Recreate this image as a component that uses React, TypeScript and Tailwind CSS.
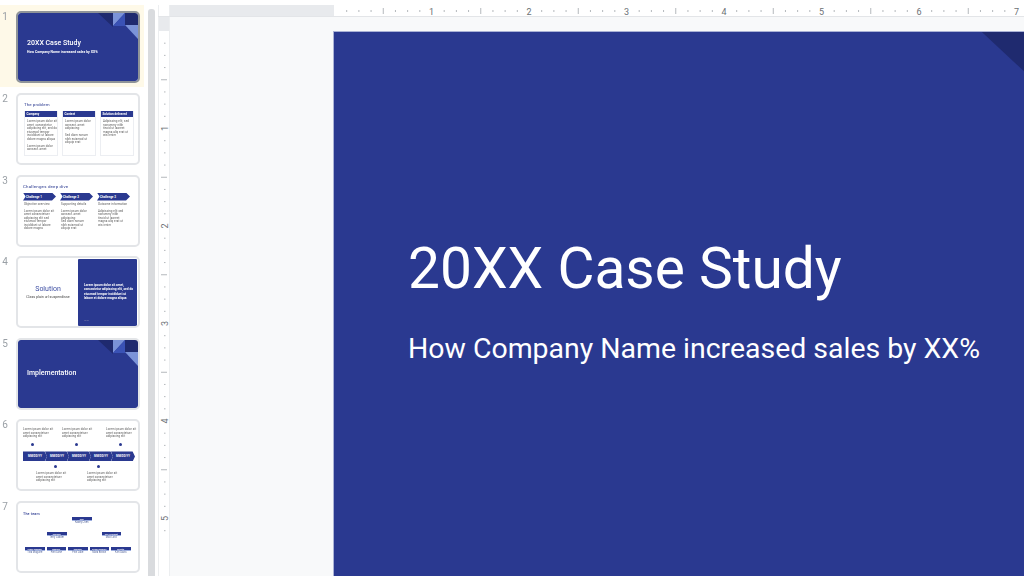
import React from "react";

function Decor() {
  return (
    <svg viewBox="0 0 120 68" className="absolute inset-0 w-full h-full">
      <polygon points="80,0 95,0 95,14" fill="#1f2a6f" />
      <polygon points="95,0 107,0 95,13" fill="#7b93d8" />
      <polygon points="107,0 107,13 95,13" fill="#3a52b5" />
      <rect x="107" y="0" width="13" height="12" fill="#1f2a6f" />
      <polygon points="107,12 120,12 120,26" fill="#7b93d8" />
    </svg>
  );
}

function Thumb({ n, selected, children }: { n: number; selected?: boolean; children: React.ReactNode }) {
  return (
    <div className={selected ? "flex h-[82px] bg-[#fef9e8] pt-[6px]" : "flex h-[81.6px] pt-[6px]"}>
      <div className="w-[16px] pr-[6px] text-center text-[10px] leading-[12px] text-[#9aa0a6] blur-[0.3px]">{n}</div>
      <div
        className={
          selected
            ? "w-[124px] h-[72px] border-2 border-[#8f9499] rounded-[5px] overflow-hidden bg-white"
            : "w-[124px] h-[72px] border-2 border-[#e3e5e8] rounded-[5px] overflow-hidden bg-white"
        }
      >
        <div className="relative w-full h-full overflow-hidden blur-[0.5px]">{children}</div>
      </div>
    </div>
  );
}

function Lines({ items, className }: { items: string[]; className?: string }) {
  return (
    <div className={"text-[2.9px] leading-[3.5px] tracking-[0.1px] text-[#555] " + (className ?? "")}>
      {items.map((t, i) => (
        <div key={i} className="whitespace-nowrap h-[3.5px]">{t}</div>
      ))}
    </div>
  );
}

function ColCard({ title, children }: { title: string; children: React.ReactNode }) {
  return (
    <div className="w-[34px] h-[45px] border border-[#eceef2] border-t-0">
      <div className="h-[6px] bg-[#2a3990] text-white text-[3px] font-bold leading-[6px] pl-[1.5px] whitespace-nowrap">{title}</div>
      <div className="pt-[3px] pl-[2px]">{children}</div>
    </div>
  );
}

function Slide2() {
  return (
    <div className="pl-[6px] pt-[7px]">
      <div className="text-[4.4px] leading-[6px] text-[#2a3990] tracking-[0.1px]">The problem</div>
      <div className="flex gap-[4px] mt-[3px]">
        <ColCard title="Company">
          <Lines items={["Lorem ipsum dolor sit", "amet, consectetur", "adipiscing elit, sed do", "eiusmod tempor", "incididunt ut labore", "dolore magna aliqua", "", "Lorem ipsum dolor", "consect. amet"]} />
        </ColCard>
        <ColCard title="Context">
          <Lines items={["Lorem ipsum dolor", "consect. amet", "adipiscing:", "", "   Sed diam nonum", "   nibh euismod ut", "   aliquip erat"]} />
        </ColCard>
        <ColCard title="Solution delivered">
          <Lines items={["Adipiscing elit, sed", "nonummy nibh", "tincid ut laoreet", "magna aliq erat ut", "wisi enim"]} />
        </ColCard>
      </div>
    </div>
  );
}

function Chev({ title, children }: { title: string; children: React.ReactNode }) {
  return (
    <div className="w-[33px]">
      <div className="h-[8px] bg-[#2a3990] text-white text-[3px] font-bold leading-[8px] pl-[3px] whitespace-nowrap [clip-path:polygon(0_0,88%_0,100%_50%,88%_100%,0_100%,8%_50%)]">{title}</div>
      <div className="pt-[2px] pl-[1px]">{children}</div>
    </div>
  );
}

function Slide3() {
  return (
    <div className="pl-[5px] pt-[7px]">
      <div className="text-[4.4px] leading-[6px] text-[#2a3990] tracking-[0.2px]">Challenges deep dive</div>
      <div className="flex gap-[4px] mt-[3px]">
        <Chev title="Challenge 1">
          <Lines items={["Objective overview", "", "Lorem ipsum dolor sit", "amet consectetuer", "adipiscing elit sed", "eiusmod tempor", "incididunt ut labore", "dolore magna"]} />
        </Chev>
        <Chev title="Challenge 2">
          <Lines items={["Supporting details", "", "Lorem ipsum dolor", "consect. amet", "adipiscing:", "   Sed diam nonum", "   nibh euismod ut", "   aliquip erat"]} />
        </Chev>
        <Chev title="Challenge 3">
          <Lines items={["Outcome information", "", "Adipiscing elit sed", "nonummy nibh", "tincid ut laoreet", "magna aliq erat ut", "wisi enim"]} />
        </Chev>
      </div>
    </div>
  );
}

function Slide4() {
  return (
    <div className="flex h-full">
      <div className="w-[60px] flex flex-col items-center pt-[27px]">
        <div className="text-[7px] leading-[9px] text-[#3d4ea3]">Solution</div>
        <div className="text-[3.6px] leading-[6px] text-[#444] whitespace-nowrap">Class plain url suspendisse</div>
      </div>
      <div className="flex-1 bg-[#2a3990] mr-[1px] mt-[0.5px] rounded-[1px] pl-[6px] pt-[24px] text-white text-[3.2px] font-bold leading-[4.4px]">
        <div>Lorem ipsum dolor sit amet,</div>
        <div>consectetur adipiscing elit, sed do</div>
        <div>eiusmod tempor incididunt ut</div>
        <div>labore et dolore magna aliqua</div>
        <div className="mt-[19px] text-[#aab] font-normal">—— </div>
      </div>
    </div>
  );
}

function Slide5() {
  return (
    <div className="relative h-full bg-[#2a3990] pl-[9px] pt-[29px] text-white text-[7px] font-medium leading-[9px] rounded-[2px]">
      <Decor />
      Implementation
    </div>
  );
}

function Slide1() {
  return (
    <div className="relative h-full bg-[#2a3990] pl-[9px] pt-[25px] text-white rounded-[2px]">
      <Decor />
      <div className="text-[7px] leading-[10px] font-medium">20XX Case Study</div>
      <div className="text-[3.5px] leading-[6px] mt-[1px] font-bold whitespace-nowrap">How Company Name increased sales by XX%</div>
    </div>
  );
}

const three = ["Lorem ipsum dolor sit", "amet consectetuer", "adipiscing elit"];

function Dot({ className }: { className: string }) {
  return <div className={"w-[3px] h-[3px] rounded-full bg-[#2a3990] " + className} />;
}

function Slide6() {
  const dates = ["MM/DD/YY", "MM/DD/YY", "MM/DD/YY", "MM/DD/YY", "MM/DD/YY"];
  return (
    <div className="pt-[7px] pl-[5px]">
      <div className="flex">
        <Lines items={three} className="w-[39px]" />
        <Lines items={three} className="w-[44px]" />
        <Lines items={three} />
      </div>
      <div className="flex mt-[4.5px]">
        <Dot className="ml-[8px] mr-[41px]" />
        <Dot className="mr-[41px]" />
        <Dot />
      </div>
      <div className="flex mt-[5px] w-[112px]">
        {dates.map((d, i) => (
          <div
            key={i}
            className={
              i === 0
                ? "flex-1 h-[10px] bg-[#2a3990] text-white text-[2.8px] font-bold leading-[10px] text-center [clip-path:polygon(0_0,90%_0,100%_50%,90%_100%,0_100%)]"
                : "flex-1 -ml-[2px] h-[10px] bg-[#2a3990] text-white text-[2.8px] font-bold leading-[10px] text-center [clip-path:polygon(0_0,90%_0,100%_50%,90%_100%,0_100%,8%_50%)]"
            }
          >
            {d}
          </div>
        ))}
      </div>
      <div className="flex mt-[4px]">
        <Dot className="ml-[31px] mr-[40px]" />
        <Dot />
      </div>
      <div className="flex mt-[4px]">
        <Lines items={three} className="ml-[13px] w-[51px]" />
        <Lines items={three} />
      </div>
    </div>
  );
}

function Org({ t, s, w = "w-[19.5px]" }: { t: string; s: string; w?: string }) {
  return (
    <div className={w + " flex flex-col items-center"}>
      <div className="w-full h-[4.5px] bg-[#2a3990] border-b border-[#9fb0e0] text-white text-[2px] font-bold leading-[4px] text-center whitespace-nowrap overflow-hidden">{t}</div>
      <div className="text-[2.6px] leading-[4px] text-[#5a6a9c] whitespace-nowrap">{s}</div>
    </div>
  );
}

function Slide7() {
  return (
    <div className="pt-[9px] pl-[5px]">
      <div className="text-[3.6px] leading-[4px] text-[#2a3990] font-medium tracking-[0.2px]">The team</div>
      <div className="pl-[49px] mt-[1px]">
        <Org t="CEO" s="Kasey Chen" />
      </div>
      <div className="flex mt-[6.5px] pl-[24px] gap-[35px]">
        <Org t="Manager" s="Terry Ladder" />
        <Org t="Vice President" s="Max Lord" />
      </div>
      <div className="flex mt-[6.5px] pl-[2px] gap-[2px]">
        <Org t="Senior Manager" s="Tina Maguire" />
        <Org t="Manager" s="Finn Lane" />
        <Org t="Manager" s="Finn Lake" />
        <Org t="Senior Manager" s="Mara Brown" />
        <Org t="Director" s="Kim Davis" />
      </div>
    </div>
  );
}

function HRuler() {
  const ticks = [];
  for (let i = 0; i < 60; i++) {
    const x = 0.5 + (i * 97.5) / 8;
    if (x > 691) break;
    if (i % 8 === 0) continue;
    const long = i % 4 === 0;
    ticks.push(<line key={i} x1={x} x2={x} y1={long ? 3 : 5} y2={long ? 9 : 7} stroke="#b4b8bc" strokeWidth="1" />);
  }
  return (
    <svg width="690" height="12" className="block">
      {ticks}
      {[1, 2, 3, 4, 5, 6, 7].map((n) => (
        <text key={n} x={n * 97.5} y="9.5" textAnchor="middle" fontSize="9" fill="#6b7075" fontFamily="Roboto">{n}</text>
      ))}
    </svg>
  );
}

function VRuler() {
  const ticks = [];
  for (let i = 1; i < 42; i++) {
    if (i % 8 === 0) continue;
    const y = (i * 97.5) / 8;
    const long = i % 4 === 0;
    ticks.push(<line key={i} y1={y} y2={y} x1={long ? 2 : 5} x2={long ? 8 : 6.5} stroke="#b4b8bc" strokeWidth="1" />);
  }
  return (
    <svg width="12" height="545" className="block">
      {ticks}
      {[1, 2, 3, 4, 5].map((n) => (
        <text key={n} x="0" y="0" transform={`translate(8.5 ${n * 97.5}) rotate(-90)`} textAnchor="middle" fontSize="9" fill="#6b7075" fontFamily="Roboto">{n}</text>
      ))}
    </svg>
  );
}

export default function App() {
  return (
    <div className="w-[1024px] h-[576px] overflow-hidden bg-white flex flex-col font-['Roboto',sans-serif]">
      <div className="h-[5px] shrink-0 bg-white" />
      <div className="flex-1 flex min-h-0">
        {/* filmstrip */}
        <div className="w-[144px] shrink-0 overflow-hidden">
          <Thumb n={1} selected><Slide1 /></Thumb>
          <Thumb n={2}><Slide2 /></Thumb>
          <Thumb n={3}><Slide3 /></Thumb>
          <Thumb n={4}><Slide4 /></Thumb>
          <Thumb n={5}><Slide5 /></Thumb>
          <Thumb n={6}><Slide6 /></Thumb>
          <Thumb n={7}><Slide7 /></Thumb>
        </div>
        {/* scrollbar */}
        <div className="w-[14px] shrink-0 pl-[4px] pr-[3px] pt-[4px]">
          <div className="h-full bg-[#d9dbde] rounded-t-[3px]" />
        </div>
        {/* editor */}
        <div className="flex-1 flex flex-col min-w-0">
          <div className="h-[12px] shrink-0 flex border-b border-[#e3e5e8]">
            <div className="w-[12px] shrink-0 bg-white border-x border-[#eceef0]" />
            <div className="w-[164px] shrink-0 bg-[#e8eaed]" />
            <div className="flex-1 bg-white overflow-hidden"><HRuler /></div>
          </div>
          <div className="flex-1 flex min-h-0">
            <div className="w-[12px] shrink-0 flex flex-col border-x border-[#eceef0]">
              <div className="h-[14px] shrink-0 bg-[#e8eaed]" />
              <div className="flex-1 bg-white overflow-hidden"><VRuler /></div>
            </div>
            <div className="flex-1 bg-[#f8f9fa] pl-[163px] pt-[13.5px] overflow-hidden">
              <div className="relative w-[975px] h-[548px] bg-[#2a3990] border-t border-l border-[#aab2d6] text-white pl-[74px] pt-[201.5px]">
                <Decor />
                <div className="text-[56.9px] leading-[72px] whitespace-nowrap">20XX Case Study</div>
                <div className="text-[28.45px] leading-[40px] mt-[24px] whitespace-nowrap">How Company Name increased sales by XX%</div>
              </div>
            </div>
          </div>
        </div>
      </div>
    </div>
  );
}
